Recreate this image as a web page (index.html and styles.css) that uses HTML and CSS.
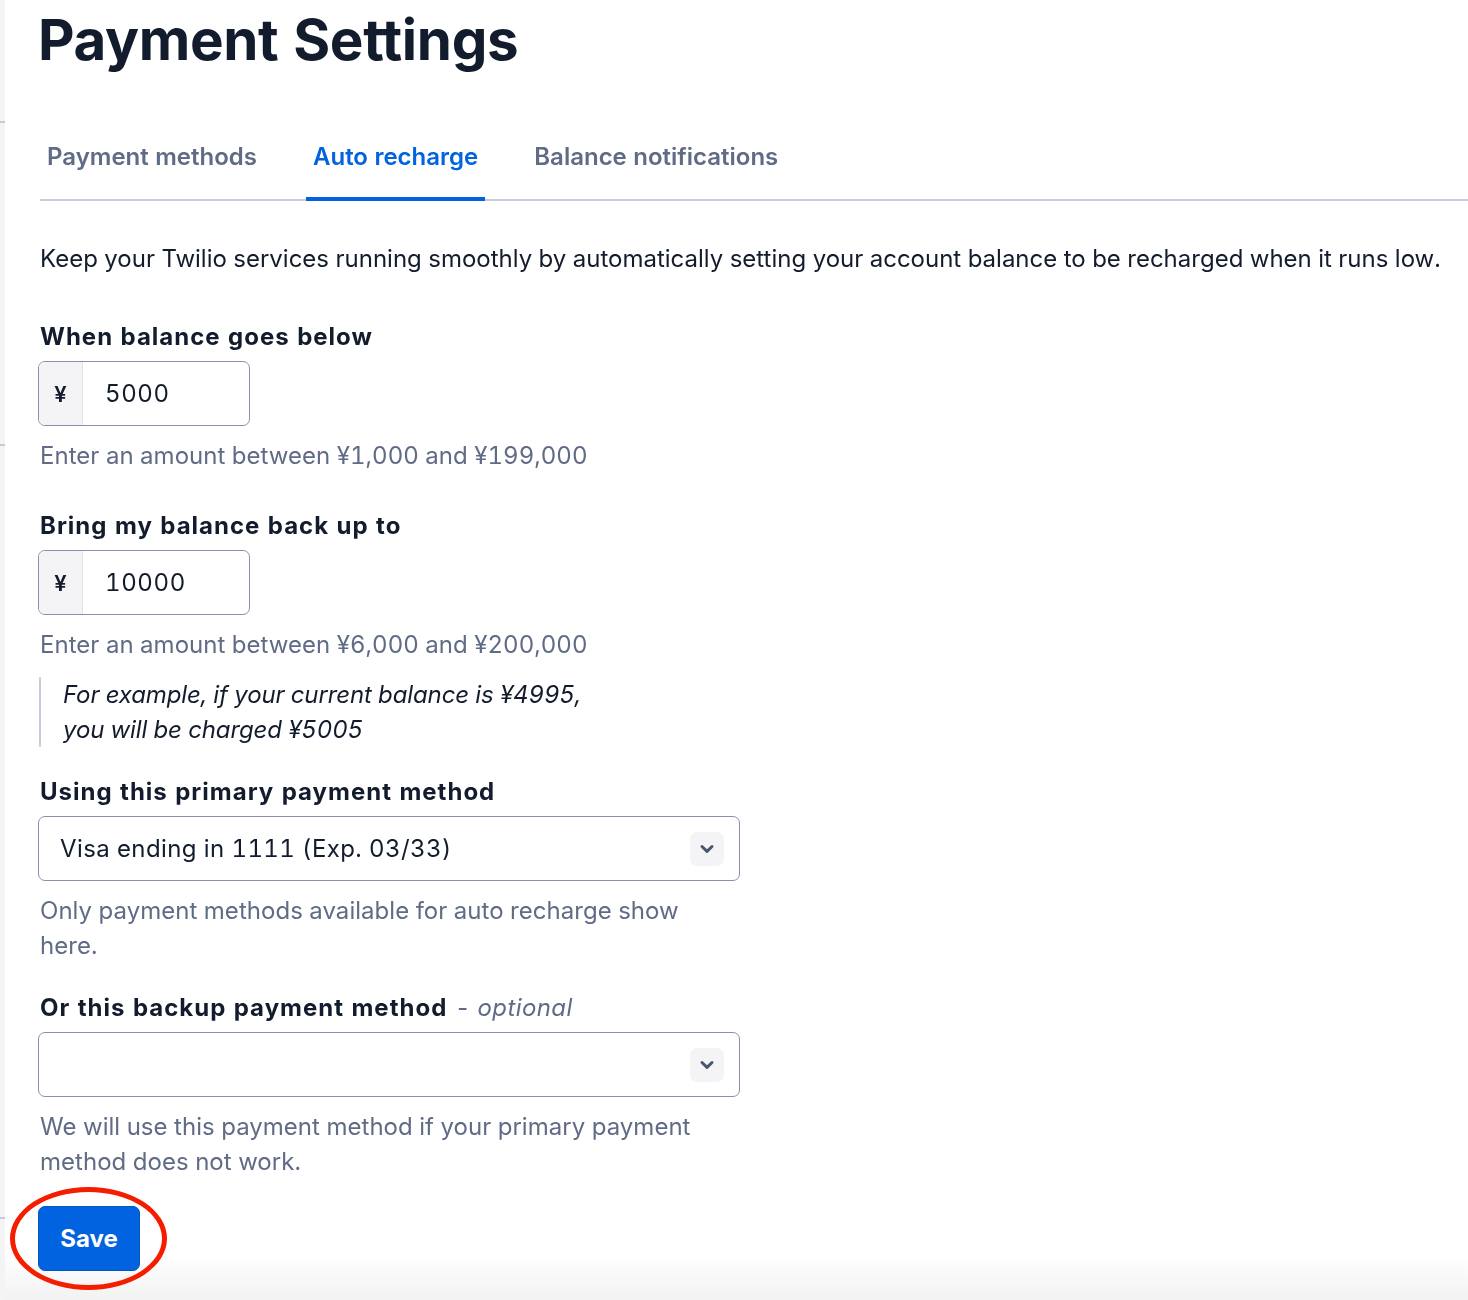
FILE: index.html
```html
<!DOCTYPE html>
<html lang="en">
<head>
<meta charset="utf-8">
<title>Payment Settings</title>
<link rel="stylesheet" href="styles.css">
</head>
<body>
<div class="fade"></div>
<div class="page">
  <aside class="rail">
    <div class="rail-gap g1"></div><div class="rail-mark"></div>
    <div class="rail-gap g2"></div><div class="rail-mark"></div>
    <div class="rail-gap g3"></div><div class="rail-mark"></div>
  </aside>
  <main class="main">
    <h1 class="title">Payment Settings</h1>
    <nav class="tabs">
      <div class="tab">Payment methods</div>
      <div class="tab active">Auto recharge</div>
      <div class="tab">Balance notifications</div>
    </nav>
    <p class="intro">Keep your Twilio services running smoothly by automatically setting your account balance to be recharged when it runs low.</p>

    <div class="form">
      <div class="field f1">
        <div class="label">When balance goes below</div>
        <div class="amount">
          <span class="prefix">¥</span>
          <span class="value">5000</span>
        </div>
        <div class="help">Enter an amount between ¥1,000 and ¥199,000</div>
      </div>

      <div class="field f2">
        <div class="label">Bring my balance back up to</div>
        <div class="amount">
          <span class="prefix">¥</span>
          <span class="value">10000</span>
        </div>
        <div class="help">Enter an amount between ¥6,000 and ¥200,000</div>
        <blockquote class="example">For example, if your current balance is ¥4995,<br>you will be charged ¥5005</blockquote>
      </div>

      <div class="field f3">
        <div class="label">Using this primary payment method</div>
        <div class="select">
          <span class="select-text">Visa ending in 1111 (Exp. 03/33)</span>
          <span class="chev"><svg width="16" height="12" viewBox="0 0 16 12"><path d="M3 3.5 8 8.3l5-4.8" fill="none" stroke="#4b5671" stroke-width="3" stroke-linecap="round" stroke-linejoin="round"/></svg></span>
        </div>
        <div class="help wide">Only payment methods available for auto recharge show here.</div>
      </div>

      <div class="field f4">
        <div class="label">Or this backup payment method <span class="optional">- optional</span></div>
        <div class="select">
          <span class="select-text"></span>
          <span class="chev"><svg width="16" height="12" viewBox="0 0 16 12"><path d="M3 3.5 8 8.3l5-4.8" fill="none" stroke="#4b5671" stroke-width="3" stroke-linecap="round" stroke-linejoin="round"/></svg></span>
        </div>
        <div class="help wide">We will use this payment method if your primary payment method does not work.</div>
      </div>

      <div class="actions">
        <button class="save">Save</button>
        <span class="ring"></span>
      </div>
    </div>
  </main>
</div>
</body>
</html>
```

FILE: styles.css
```css
html, body {
  margin: 0;
  padding: 0;
  background: #ffffff;
}
body {
  font-family: Inter, "Noto Sans", "Liberation Sans", sans-serif;
  font-variant-numeric: tabular-nums;
  color: #121c2d;
  height: 1300px;
  overflow: hidden;
}
.page {
  position: relative;
  z-index: 1;
  display: flex;
  min-height: 1300px;
}
.rail {
  width: 5px;
  flex: none;
  background: #f4f4f6;
  display: flex;
  flex-direction: column;
}
.rail-gap.g1 { height: 121px; }
.rail-gap.g2 { height: 321px; }
.rail-gap.g3 { height: 771px; }
.rail-mark { height: 2px; background: #c9ccd6; }

.main {
  flex: 1;
  padding-left: 33px;
}
.title {
  margin: 0;
  padding-top: 6px;
  font-size: 56.5px;
  line-height: 68px;
  font-weight: 700;
  letter-spacing: -0.35px;
  color: #121c2d;
}
.tabs {
  display: flex;
  gap: 42px;
  margin-top: 50px;
  margin-left: 2px;
  border-bottom: 2px solid #cacdd8;
}
.tab {
  padding: 0 7px;
  height: 77px;
  box-sizing: border-box;
  padding-top: 16px;
  font-size: 24px;
  line-height: 34px;
  font-weight: 600;
  color: #606b85;
  margin-bottom: -2px;
  border-bottom: 4px solid transparent;
}
.tab.active {
  color: #0263e0;
  border-bottom-color: #0263e0;
}
.intro {
  margin: 40px 0 0 2px;
  font-size: 24px;
  line-height: 35px;
  color: #121c2d;
}
.form {
  width: 702px;
  display: flex;
  flex-direction: column;
}
.field {
  display: flex;
  flex-direction: column;
}
.field.f1 { margin-top: 44px; }
.field.f2 { margin-top: 36px; }
.field.f3 { margin-top: 28px; }
.field.f4 { margin-top: 28px; }
.label {
  margin-left: 2px;
  font-size: 24px;
  line-height: 34px;
  font-weight: 700;
  letter-spacing: 1px;
  color: #121c2d;
  margin-bottom: 7px;
}
.optional {
  font-weight: 400;
  font-style: italic;
  color: #606b85;
  letter-spacing: 0.4px;
  margin-left: 0;
}
.amount {
  width: 212px;
  height: 65px;
  box-sizing: border-box;
  border: 1.5px solid #8891aa;
  border-radius: 7px;
  display: flex;
  overflow: hidden;
}
.prefix {
  width: 43px;
  flex: none;
  background: #f4f4f6;
  border-right: 1.5px solid #e1e3ea;
  display: flex;
  align-items: center;
  justify-content: center;
  font-size: 22px;
  font-weight: 600;
  color: #121c2d;
}
.value {
  display: flex;
  align-items: center;
  padding-left: 22px;
  font-size: 24px;
  letter-spacing: 0.6px;
  color: #121c2d;
}
.help {
  margin: 12px 0 0 2px;
  font-size: 24px;
  line-height: 35px;
  letter-spacing: 0.03px;
  color: #606b85;
}
.help.wide { width: 668px; }
.example {
  margin: 15px 0 0 1px;
  padding: 0 0 0 22px;
  border-left: 2px solid #cacdd8;
  font-style: italic;
  font-size: 24px;
  line-height: 35px;
  letter-spacing: -0.12px;
  color: #121c2d;
}
.select {
  width: 702px;
  height: 65px;
  box-sizing: border-box;
  border: 1.5px solid #8891aa;
  border-radius: 7px;
  display: flex;
  align-items: center;
  justify-content: space-between;
  padding: 0 15px 0 21px;
}
.select-text {
  font-size: 24px;
  color: #121c2d;
  letter-spacing: 0.4px;
}
.chev {
  width: 34px;
  height: 34px;
  border-radius: 7px;
  background: #f4f4f6;
  display: flex;
  align-items: center;
  justify-content: center;
}
.actions {
  position: relative;
  margin-top: 27px;
  align-self: flex-start;
}
.save {
  display: block;
  width: 102px;
  height: 65px;
  border: 1.5px solid #0554c4;
  border-radius: 7px;
  background: #0263e0;
  color: #ffffff;
  font-family: Inter, "Noto Sans", sans-serif;
  font-size: 24px;
  font-weight: 700;
  cursor: pointer;
}
.ring {
  position: absolute;
  left: -28px;
  top: -19px;
  width: 157px;
  height: 103px;
  box-sizing: border-box;
  border: 5px solid #f51d00;
  border-radius: 50%;
  pointer-events: none;
}
.fade {
  position: fixed;
  z-index: 0;
  left: 0;
  right: 0;
  bottom: 0;
  height: 45px;
  background: linear-gradient(to bottom, rgba(242,242,242,0), rgba(242,242,242,1));
  pointer-events: none;
}
```
